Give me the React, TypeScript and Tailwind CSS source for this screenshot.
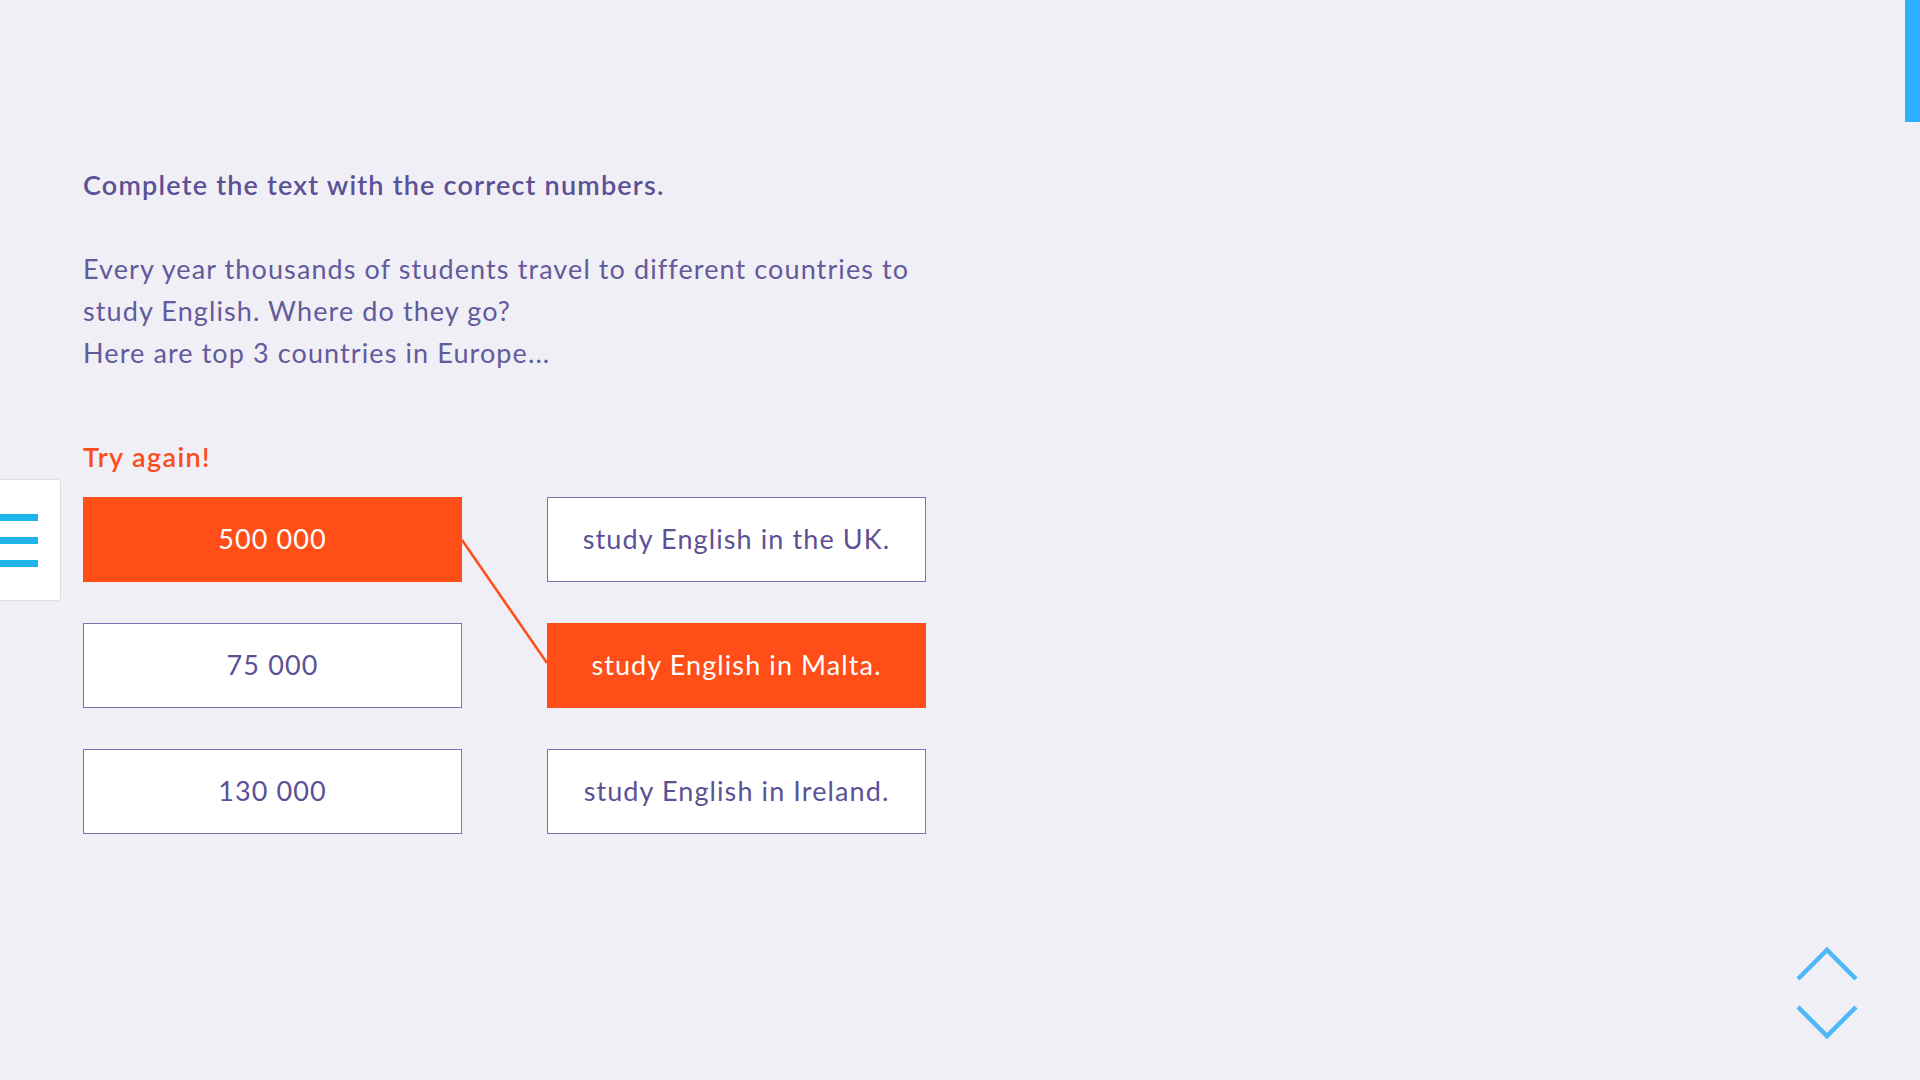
import { useState } from "react";

type Pair = { left: string; right: string };

const pairs: Pair[] = [
  { left: "500 000", right: "study English in the UK." },
  { left: "75 000", right: "study English in Malta." },
  { left: "130 000", right: "study English in Ireland." },
];

function MatchBox({ label, active }: { label: string; active: boolean }) {
  return (
    <button
      className={
        active
          ? "flex h-[85px] w-[379px] items-center justify-center border border-[#ff4e18] bg-[#ff4e18] text-[27px] tracking-[1.1px] text-white"
          : "flex h-[85px] w-[379px] items-center justify-center border border-[#7c72b2] bg-white text-[27px] tracking-[1.1px] text-[#5c5196]"
      }
    >
      {label}
    </button>
  );
}

export default function App() {
  // selected pair: left index -> right index
  const [selected] = useState({ left: 0, right: 1 });

  return (
    <div
      className="relative h-[1080px] w-[1920px] overflow-hidden bg-[#f0eff5]"
      style={{ fontFamily: "Lato, 'Open Sans', sans-serif" }}
    >
      {/* scroll progress */}
      <div className="absolute right-0 top-0 h-[122px] w-[15px] bg-[#2daeff]" />

      {/* side menu toggle */}
      <div className="absolute left-0 top-[479px] flex h-[122px] w-[61px] flex-col justify-center gap-[16px] rounded-r-[4px] border border-l-0 border-[#dcdce3] bg-white">
        <span className="block h-[7px] w-[38px] bg-[#1fb5ea]" />
        <span className="block h-[7px] w-[38px] bg-[#1fb5ea]" />
        <span className="block h-[7px] w-[38px] bg-[#1fb5ea]" />
      </div>

      <main className="flex flex-col pl-[83px] pt-[164px] tracking-[1.1px] text-[#5c5196]">
        <h2 className="text-[27px] font-semibold leading-[42px] tracking-[1.2px]">
          Complete the text with the correct numbers.
        </h2>
        <p className="mt-[42px] whitespace-nowrap text-[27px] leading-[42px] text-[#635a9c]">
          Every year thousands of students travel to different countries to
          <br />
          study English. Where do they go?
          <br />
          Here are top 3 countries in Europe...
        </p>

        <div className="mt-[62px] text-[27px] font-semibold leading-[42px] tracking-[1.4px] text-[#ff4a1a]">
          Try again!
        </div>

        <div className="relative mt-[19px] grid w-max grid-cols-[379px_379px] gap-x-[85px] gap-y-[41px]">
          {pairs.map((p, i) => (
            <div key={i} className="contents">
              <MatchBox label={p.left} active={i === selected.left} />
              <MatchBox label={p.right} active={i === selected.right} />
            </div>
          ))}
          <svg
            className="pointer-events-none absolute left-0 top-0"
            width="843"
            height="338"
          >
            <line
              x1="379"
              y1="43"
              x2="464"
              y2="166"
              stroke="#ff4e18"
              strokeWidth="2.5"
            />
          </svg>
        </div>
      </main>

      {/* section navigation */}
      <div className="absolute left-[1795px] top-[946px] flex flex-col gap-[22px]">
        <svg width="64" height="36" viewBox="0 0 64 36">
          <polyline
            points="3,33 32,4 61,33"
            fill="none"
            stroke="#4db8f5"
            strokeWidth="4.5"
          />
        </svg>
        <svg width="64" height="36" viewBox="0 0 64 36">
          <polyline
            points="3,3 32,32 61,3"
            fill="none"
            stroke="#4db8f5"
            strokeWidth="4.5"
          />
        </svg>
      </div>
    </div>
  );
}
